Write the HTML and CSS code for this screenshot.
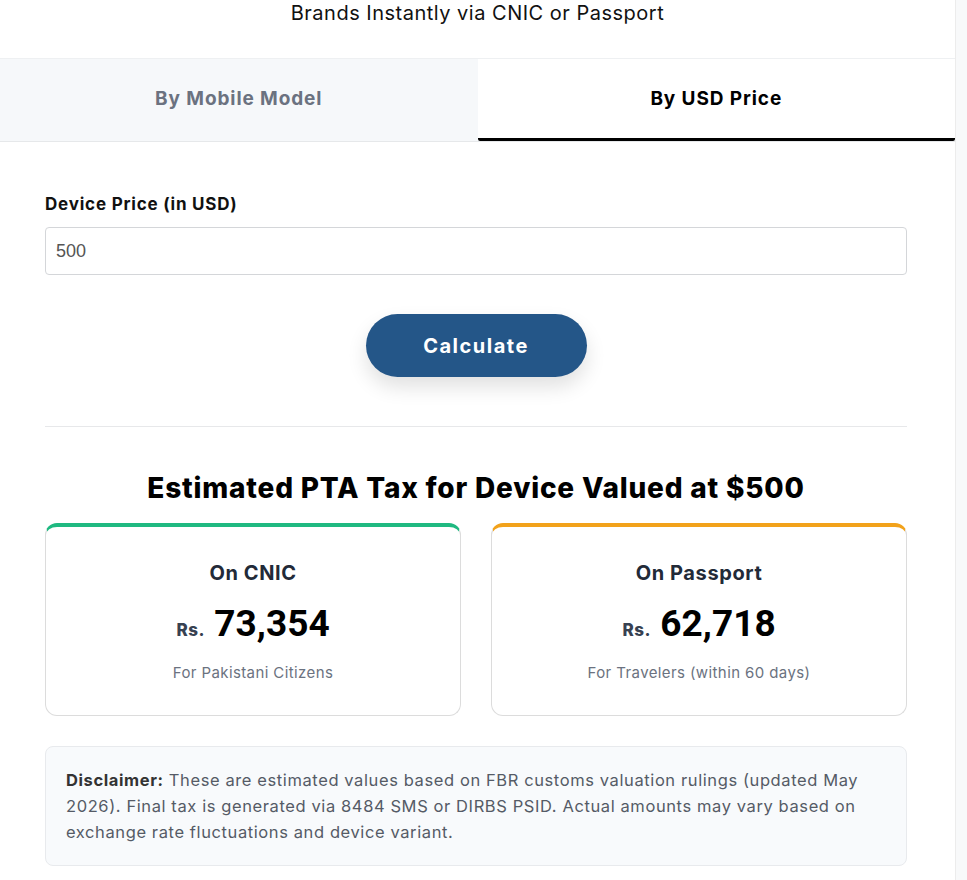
FILE: index.html
```html
<!DOCTYPE html>
<html lang="en">

<head>
  <meta charset="UTF-8">
  <meta name="viewport" content="width=device-width, initial-scale=1.0">
  <title>PTA Tax Calculator</title>
  <link rel="stylesheet" href="styles.css">
</head>

<body>

  <div class="page">
    <p class="intro">Brands Instantly via CNIC or Passport</p>

    <div class="tabs">
      <button class="tab">By Mobile Model</button>
      <button class="tab active">By USD Price</button>
    </div>

    <div class="panel">
      <label for="usd">Device Price (in USD)</label>
      <input id="usd" type="number" value="500">

      <div class="actions">
        <button class="btn-calc">Calculate</button>
      </div>

      <hr>

      <h2 class="result-title">Estimated PTA Tax for Device Valued at $500</h2>

      <div class="results">
        <div class="result-card cnic">
          <h3>On CNIC</h3>
          <p class="amount"><span class="cur">Rs.</span> 73,354</p>
          <p class="note">For Pakistani Citizens</p>
        </div>
        <div class="result-card passport">
          <h3>On Passport</h3>
          <p class="amount"><span class="cur">Rs.</span> 62,718</p>
          <p class="note">For Travelers (within 60 days)</p>
        </div>
      </div>

      <div class="disclaimer">
        <p><strong>Disclaimer:</strong> These are estimated values based on FBR customs valuation rulings (updated May 2026). Final tax is generated via 8484 SMS or DIRBS PSID. Actual amounts may vary based on exchange rate fluctuations and device variant.</p>
      </div>
    </div>
  </div>

</body>

</html>
```

FILE: styles.css
```css
body {
  margin: 0;
  font-family: Inter, "Open Sans", sans-serif;
  background-color: #f8f9fa;
  color: #111;
}

.page {
  width: 955px;
  background: #fff;
  border-right: 1px solid #ececec;
  min-height: 880px;
}

.intro {
  margin: 0;
  padding-top: 1px;
  height: 57px;
  text-align: center;
  font-size: 20px;
  line-height: 24px;
  letter-spacing: 0.5px;
  color: #111;
}

.tabs {
  display: flex;
  border-top: 1px solid #eef0f2;
  border-bottom: 1px solid #e6e8ea;
}

.tab {
  flex: 1;
  height: 82px;
  padding: 0 0 3px;
  border: none;
  background: #f6f8fa;
  font-family: inherit;
  font-size: 19px;
  font-weight: 700;
  color: #6b7280;
  letter-spacing: 0.9px;
}

.tab.active {
  background: #fff;
  color: #000;
  padding: 0;
  border-bottom: 3px solid #000;
  border-radius: 0 0 2px 2px;
}

.panel {
  padding: 52px 48px 20px 45px;
}

label {
  display: block;
  font-size: 17px;
  font-weight: 700;
  letter-spacing: 0.8px;
  margin-bottom: 13px;
}

input {
  box-sizing: border-box;
  width: 100%;
  height: 48px;
  padding: 0 10px;
  border: 1px solid #d4d6d9;
  border-radius: 4px;
  font-family: "Liberation Sans", Arial, sans-serif;
  font-size: 18px;
  color: #555;
}

.actions {
  display: flex;
  justify-content: center;
  margin-top: 39px;
}

.btn-calc {
  width: 221px;
  height: 63px;
  border: none;
  border-radius: 32px;
  background-color: #245688;
  color: #fff;
  font-family: inherit;
  font-size: 20px;
  font-weight: 700;
  letter-spacing: 1.5px;
  box-shadow: 0 10px 20px rgba(0, 0, 0, 0.12);
  cursor: pointer;
}

hr {
  border: none;
  border-top: 1px solid #e7e8ea;
  margin: 49px 0 0;
}

.result-title {
  margin: 43px 0 17px;
  text-align: center;
  font-size: 28px;
  line-height: 36px;
  font-weight: 800;
  letter-spacing: 0.8px;
  color: #000;
}

.results {
  display: grid;
  grid-template-columns: 1fr 1fr;
  gap: 30px;
}

.result-card {
  height: 193px;
  box-sizing: border-box;
  border: 1px solid #dcdcdc;
  border-top: 4px solid #1fb981;
  border-radius: 12px;
  text-align: center;
  padding-top: 34px;
}

.result-card.passport {
  border-top-color: #f2a21b;
}

.result-card h3 {
  margin: 0;
  font-size: 20px;
  line-height: 24px;
  font-weight: 700;
  letter-spacing: 0.6px;
  color: #222a38;
}

.amount {
  margin: 16px 0 0;
  font-family: Roboto, sans-serif;
  font-size: 37px;
  line-height: 46px;
  font-weight: 700;
  color: #000;
}

.cur {
  font-family: Inter, sans-serif;
  font-size: 17px;
  font-weight: 800;
  letter-spacing: 0.6px;
  color: #374151;
}

.note {
  margin: 10px 0 0;
  font-size: 15px;
  letter-spacing: 0.4px;
  color: #6b7280;
}

.disclaimer {
  margin-top: 30px;
  padding: 20px;
  background: #f8fafc;
  border: 1px solid #e8eaed;
  border-radius: 8px;
  font-size: 16.5px;
  line-height: 26px;
  letter-spacing: 0.6px;
  color: #555b66;
}

.disclaimer p {
  margin: 0;
}

.disclaimer strong {
  color: #333;
}
```
